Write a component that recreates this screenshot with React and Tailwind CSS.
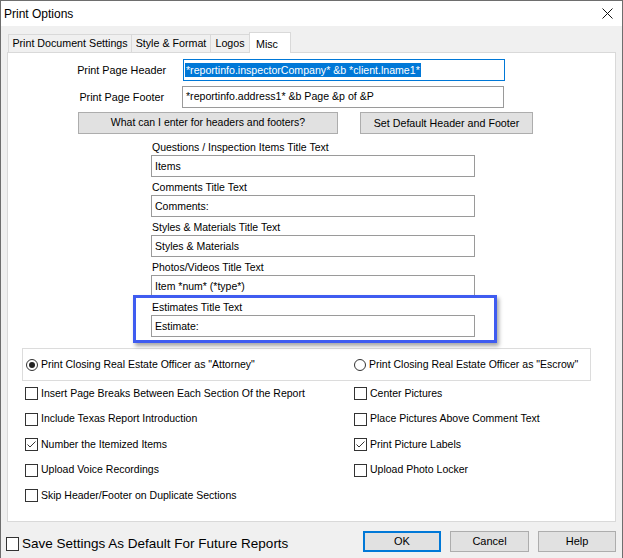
import React from "react";

function Field({ label, value }) {
  return (
    <div className="ml-[143px] w-[324px] flex flex-col">
      <div className="h-[18px] leading-[18px] pl-[1px] pt-[1px]">{label}</div>
      <div className="h-[22px] border border-[#9a9a9a] bg-white flex items-start pt-[3px] pl-[3px]">{value}</div>
    </div>
  );
}

function Check({ label, checked }) {
  return (
    <div className="h-[25.5px] flex items-center">
      <div className="w-[13px] h-[13px] border border-[#333] bg-white flex items-center justify-center shrink-0">
        {checked && (
          <svg width="11" height="11" viewBox="0 0 11 11">
            <path d="M1.5 5.5 L4 8 L9.5 2.5" fill="none" stroke="#333" strokeWidth="1" />
          </svg>
        )}
      </div>
      <span className="ml-[3px] whitespace-nowrap">{label}</span>
    </div>
  );
}

function Radio({ label, checked }) {
  return (
    <div className="flex items-center">
      <div className="w-[12px] h-[12px] rounded-full border border-[#333] bg-white flex items-center justify-center shrink-0">
        {checked && <div className="w-[6px] h-[6px] rounded-full bg-[#222]" />}
      </div>
      <span className="ml-[3px] whitespace-nowrap">{label}</span>
    </div>
  );
}

export default function App() {
  return (
    <div className="relative w-[623px] h-[558px] bg-[#f0f0f0] border-x border-t border-[#6e6e6e] flex flex-col overflow-hidden font-['Liberation_Sans',Arial,sans-serif] text-[10.5px] text-black">
      {/* Title bar */}
      <div className="h-[25px] bg-white flex items-center justify-between pl-[3px] pr-[9px] shrink-0">
        <span className="text-[12px]">Print Options</span>
        <svg width="11" height="11" viewBox="0 0 11 11">
          <path d="M0.5 0.5 L10.5 10.5 M10.5 0.5 L0.5 10.5" stroke="#111" strokeWidth="1" />
        </svg>
      </div>

      {/* Tabs */}
      <div className="mt-[6px] ml-[7px] h-[20px] flex items-end shrink-0 text-[10.7px]">
        <div className="w-[123px] h-[18px] border-l border-t border-[#d9d9d9] bg-[#f0f0f0] flex items-center justify-center">Print Document Settings</div>
        <div className="w-[79px] h-[18px] border-l border-t border-[#d9d9d9] bg-[#f0f0f0] flex items-center justify-center">Style &amp; Format</div>
        <div className="w-[39px] h-[18px] border-l border-t border-[#d9d9d9] bg-[#f0f0f0] flex items-center justify-center">Logos</div>
        <div className="relative z-10 -mb-px w-[42px] h-[21px] border-x border-t border-[#d9d9d9] bg-white flex items-start pt-[3px] pl-[6px]">Misc</div>
      </div>

      {/* Panel */}
      <div className="ml-[6px] w-[609px] h-[470px] bg-white border border-[#d9d9d9] flex flex-col shrink-0">
        <div className="mt-[6px] h-[22px] flex items-center">
          <div className="w-[158px] text-right text-[10.8px]">Print Page Header</div>
          <div className="ml-[17px] w-[322px] h-[22px] border border-[#0078d7] flex items-center pl-[1px] text-[10.6px]">
            <span className="bg-[#0078d7] text-white px-[1px] leading-[14px]">*reportinfo.inspectorCompany* &amp;b *client.lname1*</span>
          </div>
        </div>
        <div className="mt-[5px] h-[22px] flex items-center">
          <div className="w-[156px] text-right text-[10.8px]">Print Page Footer</div>
          <div className="ml-[18px] w-[322px] h-[22px] border border-[#9a9a9a] flex items-center pl-[3px] text-[10.6px]">
            *reportinfo.address1* &amp;b Page &amp;p of &amp;P
          </div>
        </div>
        <div className="mt-[4px] h-[22px] flex">
          <div className="ml-[70px] w-[260px] h-[22px] bg-[#e1e1e1] border border-[#adadad] flex items-center justify-center">What can I enter for headers and footers?</div>
          <div className="ml-[22px] w-[173px] h-[22px] bg-[#e1e1e1] border border-[#adadad] flex items-center justify-center text-[10.7px]">Set Default Header and Footer</div>
        </div>

        <div className="mt-[3px] flex flex-col">
          <Field label="Questions / Inspection Items Title Text" value="Items" />
          <Field label="Comments Title Text" value="Comments:" />
          <Field label="Styles & Materials Title Text" value="Styles & Materials" />
          <Field label="Photos/Videos Title Text" value={'Item *num* (*type*)'} />
          <Field label="Estimates Title Text" value="Estimate:" />
        </div>

        <div className="mt-[11px] ml-[14px] w-[569px] h-[33px] border border-[#dcdcdc] flex items-center pl-[3px]">
          <div className="w-[328px]">
            <Radio label={'Print Closing Real Estate Officer as "Attorney"'} checked />
          </div>
          <Radio label={'Print Closing Real Estate Officer as "Escrow"'} />
        </div>

        <div className="ml-[17px] grid grid-cols-[329px_1fr]">
          <Check label="Insert Page Breaks Between Each Section Of the Report" />
          <Check label="Center Pictures" />
          <Check label="Include Texas Report Introduction" />
          <Check label="Place Pictures Above Comment Text" />
          <Check label="Number the Itemized Items" checked />
          <Check label="Print Picture Labels" checked />
          <Check label="Upload Voice Recordings" />
          <Check label="Upload Photo Locker" />
          <Check label="Skip Header/Footer on Duplicate Sections" />
        </div>
      </div>

      {/* Bottom bar */}
      <div className="flex pt-[9px]">
        <div className="ml-[5px] mt-[6px] flex items-center h-[14px]">
          <div className="w-[13px] h-[14px] border border-[#333] bg-white shrink-0" />
          <span className="ml-[3px] text-[13.5px] whitespace-nowrap">Save Settings As Default For Future Reports</span>
        </div>
        <div className="ml-auto mr-[6px] flex gap-[9px] text-[11px]">
          <div className="w-[78px] h-[21px] bg-[#e1e1e1] border-2 border-[#0078d7] flex items-center justify-center">OK</div>
          <div className="w-[79px] h-[21px] bg-[#e1e1e1] border border-[#adadad] flex items-center justify-center">Cancel</div>
          <div className="w-[78px] h-[21px] bg-[#e1e1e1] border border-[#adadad] flex items-center justify-center">Help</div>
        </div>
      </div>

      {/* Annotation highlight */}
      <div className="absolute left-[132px] top-[294px] w-[364px] h-[48px] border-[3px] border-[#3f5cf0] shadow-[2px_3px_4px_rgba(0,0,0,0.35)] pointer-events-none" />
    </div>
  );
}
